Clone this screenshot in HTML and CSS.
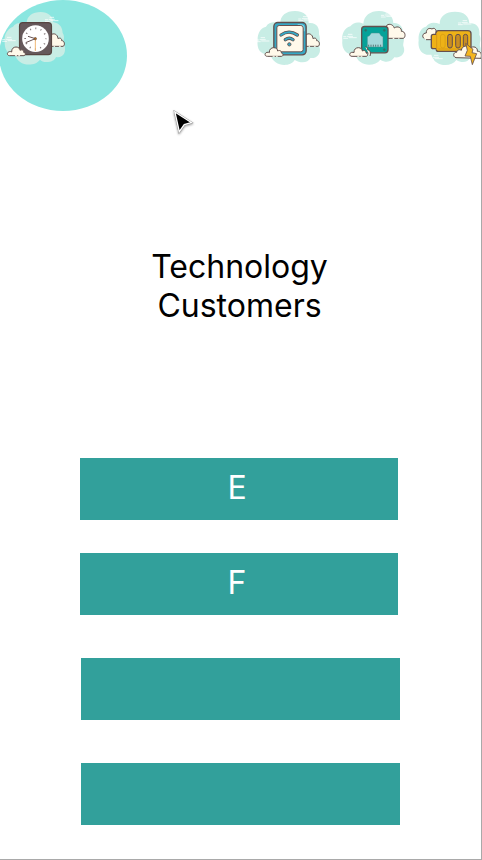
FILE: index.html
```html
<!DOCTYPE html>
<html lang="en">
<head>
<meta charset="utf-8">
<title>Technology Customers</title>
<link rel="stylesheet" href="styles.css">
</head>
<body>
<svg class="defs" width="0" height="0">
  <defs>
    <g id="cloud-left" stroke="#624f4c" stroke-width="3" stroke-linecap="round" stroke-linejoin="round">
      <path fill="#fff9ea" d="M8 28C0 28 0 18 8 16C11 15 14 16 15 17C14 7 21 2 28 2C36 2 40 7 40 12C47 8 52 13 51 18C58 18 57 28 53 28Z"/>
      <path fill="none" stroke="#fff9ea" d="M26 28h4M36 28h3"/>
    </g>
    <g id="cloud-right" stroke="#624f4c" stroke-width="3" stroke-linecap="round" stroke-linejoin="round">
      <path fill="#fff9ea" d="M0 3C8-3 20 1 21 15C27 11 33 15 32 21C41 20 43 36 36 38H0Z"/>
      <path fill="none" stroke="#fff9ea" d="M9 38h2M25 38h3"/>
    </g>
    <g id="wind" fill="none" stroke="#fff" stroke-linecap="round">
      <path stroke-width="2.2" d="M16 1h11M2 8h7M13 7h16M2 13h12M18 11h22"/>
    </g>
  </defs>
</svg>
<main class="screen">
  <div class="accent"></div>
  <header class="status">
    <svg class="icon clock" viewBox="0 0 210 225">
      <path fill="#c8ede5" d="M39 80C46 67 64 66 80 70C80 47 99 36 122 36C144 36 160 50 159 66C181 70 187 83 188 99C192 105 193 111 191 120C189 125 191 130 194 137C199 158 188 175 168 171C164 182 153 186 140 186C130 186 125 184 120 179C105 201 52 201 45 162C25 165 13 151 14 123C12 107 20 87 39 80Z"/>
      <use href="#wind" x="134" y="51"/><use href="#wind" x="6" y="111"/>
      <use href="#cloud-right" x="153" y="101"/>
      <rect x="58.500" y="68" width="96" height="96" rx="10" fill="#66595b" stroke="#574541" stroke-width="3.500"/>
      <circle cx="106.500" cy="116" r="40" fill="#fff"/>
      <circle cx="106.500" cy="116" r="31" fill="none" stroke="#817777" stroke-width="5" stroke-dasharray="3 13.232" stroke-dashoffset="1.500"/>
      <path d="M106 116L77 128M106 116L84 109" fill="none" stroke="#665252" stroke-width="3"/>
      <path d="M106 116V153" stroke="#f1b875" stroke-width="3"/>
      <circle cx="106" cy="116" r="3.500" fill="#b86a18" stroke="#574541" stroke-width="2"/>
      <use href="#cloud-left" x="20" y="139"/>
    </svg>
    <svg class="icon wifi" viewBox="0 0 240 225">
      <path fill="#c8ede5" d="M48 80C57 64 78 65 91 71C90 47 108 33 135 33C163 33 177 48 176 69C199 66 209 82 207 103C213 120 207 132 208 140C215 158 203 176 181 174C175 188 154 192 134 180C120 203 69 201 61 162C35 168 19 150 23 121C22 102 30 84 48 80Z"/>
      <use href="#wind" x="144" y="49"/><use href="#wind" x="17" y="112"/>
      <use href="#cloud-right" x="168" y="101"/>
      <rect x="71.500" y="67.500" width="97" height="97" rx="12" fill="#35a9c6" stroke="#624f4c" stroke-width="4"/>
      <path d="M143 75h10c6 0 9 3 9 9v10" stroke="#83dcec" stroke-width="4" fill="none"/>
      <rect x="80.500" y="76.500" width="79" height="79" rx="7" fill="#fff9ea" stroke="#69504c" stroke-width="3"/>
      <path d="M93 105Q117 88 142 105M106 119Q118 110 129 119" fill="none" stroke="#624f4c" stroke-width="10" stroke-linecap="round"/>
      <path d="M93 105Q117 88 142 105M106 119Q118 110 129 119" fill="none" stroke="#35a9c6" stroke-width="5.500" stroke-linecap="round"/>
      <circle cx="118" cy="133" r="5" fill="#35a9c6" stroke="#624f4c" stroke-width="2.500"/>
      <use href="#cloud-left" x="43" y="141"/>
    </svg>
    <svg class="icon network" viewBox="0 0 240 225">
      <path fill="#c8ede5" d="M46 79C55 65 73 65 85 71C87 47 105 33 132 33C160 33 174 48 175 69C195 67 207 84 203 104C211 119 203 129 205 138C214 158 199 175 178 172C171 185 153 190 136 179C119 202 69 200 61 163C34 166 19 148 22 120C20 102 28 84 46 79Z"/>
      <use href="#wind" x="137" y="38"/><use href="#wind" x="24" y="102"/>
      <path d="M154 78C158 70 174 71 178 84C188 76 201 84 199 94C212 93 213 112 205 115H155Z" fill="#fff9ea" stroke="#624f4c" stroke-width="3"/>
      <path d="M173 115h5M190 115h3" stroke="#fff9ea" stroke-width="3.500"/>
      <rect x="80" y="79.500" width="79" height="79" rx="9" fill="#05a299" stroke="#65504e" stroke-width="4"/>
      <g fill="#168179" stroke="#505c59" stroke-width="1.500"><circle cx="92" cy="91" r="3"/><circle cx="148" cy="91" r="3"/><circle cx="148" cy="149" r="3"/></g>
      <path d="M97 141V110L103 107L109 99H133L138 107L144 110V141Z" fill="#a5d8dc" stroke="#428f8d" stroke-width="1.500"/>
      <path d="M101 134v6M108 134v6M115 134v6M122 134v6M129 134v6M137 134v6" stroke="#4b6060" stroke-width="2.500"/>
      <use href="#cloud-left" x="42" y="141"/>
      <path d="M91 141C98 140 99 147 98 150C106 149 108 161 105 168" fill="#fff9ea" stroke="#624f4c" stroke-width="3"/>
    </svg>
    <svg class="icon battery" viewBox="0 0 210 225">
      <path fill="#c8ede5" d="M42 80C51 66 68 66 83 72C83 48 102 35 129 35C157 35 172 49 172 70C193 67 205 83 202 104C210 118 201 130 204 139C212 159 197 176 175 173C168 186 151 191 133 180C117 203 67 201 58 164C32 168 16 150 20 121C18 103 25 84 42 80Z"/>
      <use href="#wind" x="137" y="61"/><use href="#wind" x="51" y="165"/>
      <path d="M37 116C29 111 31 99 43 99C42 88 51 82 60 87C68 80 75 92 72 99V119H42" fill="#fff9ea" stroke="#624f4c" stroke-width="3"/>
      <path d="M72 103H64Q58 103 58 109V141Q58 146 64 146H73V149Q73 154 79 154H167Q177 154 177 144V101Q177 92 168 92H79Q72 92 72 99Z" fill="#eeb217" stroke="#65504e" stroke-width="4"/>
      <path d="M74 99V149M79 147H171" stroke="#d89816" stroke-width="3"/>
      <rect x="85.500" y="103" width="14" height="41" rx="7" fill="none" stroke="#d49a13" stroke-width="2"/>
      <g fill="#c98e22" stroke="#65504e" stroke-width="3"><rect x="107" y="103" width="14" height="41" rx="7"/><rect x="131" y="103" width="14" height="41" rx="7"/><rect x="154" y="103" width="13" height="41" rx="6.500"/></g>
      <path d="M132 173C121 170 124 156 134 157C135 150 142 147 148 151C150 136 168 134 173 145C184 136 198 142 196 154C207 153 210 163 207 175Z" fill="#fff9ea" stroke="#624f4c" stroke-width="3"/>
      <path d="M161 130L183 148L180 158L194 161L181 194L175 169L159 168L166 151Z" fill="#f4b51e" stroke="#65504e" stroke-width="2.500" stroke-linejoin="round"/>
    </svg>
  </header>
  <h1 class="title">Technology<br>Customers</h1>
  <section class="options">
    <button class="option e">E</button>
    <button class="option f">F</button>
    <button class="option third" aria-label="Option 3"></button>
    <button class="option fourth" aria-label="Option 4"></button>
  </section>
  <svg class="cursor" viewBox="0 0 84 96">
    <path d="M10 7L66 43L42 50L25 74Z" fill="#000" stroke="#8b8b8b" stroke-width="7"/>
    <path d="M10 7L66 43L42 50L25 74Z" fill="#000" stroke="#fff" stroke-width="4.500"/>
  </svg>
</main>
</body>
</html>
```
FILE: styles.css
```css
* { box-sizing: border-box; }
body { margin: 0; background: #fff; font-family: Inter, sans-serif; }
.defs { display: none; }
.screen {
  position: relative;
  width: 482px;
  height: 860px;
  overflow: hidden;
  border-right: 1px solid #a9a9a9;
  border-bottom: 1px solid #a9a9a9;
}
.accent {
  position: absolute;
  top: 0;
  left: -1px;
  width: 128px;
  height: 111px;
  border-radius: 50%;
  background: #8ae6e0;
}
.status { position: relative; display: flex; width: 482px; height: 75px; }
.icon { display: block; flex: none; width: 80px; height: 75px; }
.clock, .battery { width: 70px; }
.wifi { margin-left: 180px; }
.network { margin-left: 5px; }
.battery { margin-left: -3px; }
.title {
  width: 479px;
  margin: 172px 0 0;
  color: #000;
  font-size: 32px;
  font-weight: 400;
  line-height: 39px;
  text-align: center;
}
.options { display: flex; flex-direction: column; margin: 133px 0 0 79.75px; }
.option {
  display: block;
  width: 318.5px;
  height: 61.7px;
  padding: 0 4px 3px 0;
  border: 0;
  background: #32a09b;
  color: #fff;
  font: 400 32px/39px Inter, sans-serif;
}
.f { margin-top: 33.6px; padding-bottom: 4px; }
.third { margin: 43.3px 0 0 1.25px; }
.fourth { margin: 43.2px 0 0 1.25px; }
.cursor {
  position: absolute;
  left: 172px;
  top: 110px;
  width: 24.5px;
  height: 28px;
  filter: drop-shadow(0 1px 1px rgb(0 0 0 / 40%));
}
```
